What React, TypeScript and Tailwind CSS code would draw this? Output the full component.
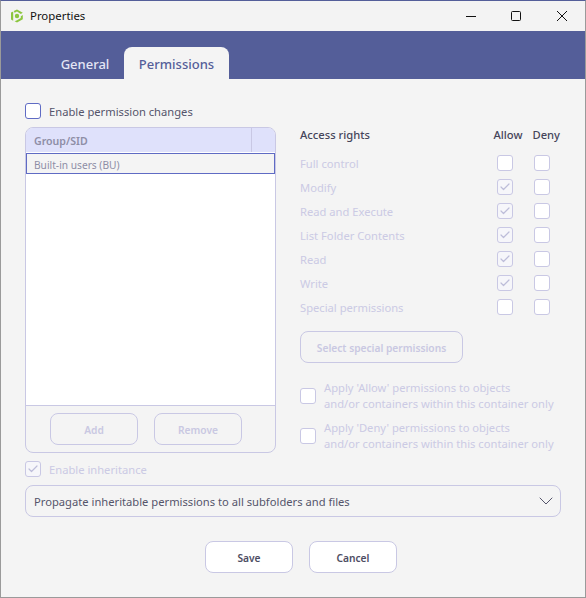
import { ChevronDown, Check } from 'lucide-react';

const rights = [
  { name: 'Full control', allow: false },
  { name: 'Modify', allow: true },
  { name: 'Read and Execute', allow: true },
  { name: 'List Folder Contents', allow: true },
  { name: 'Read', allow: true },
  { name: 'Write', allow: true },
  { name: 'Special permissions', allow: false },
];

function Box({ checked = false, active = false }: { checked?: boolean; active?: boolean }) {
  return (
    <div
      className={`flex h-4 w-4 shrink-0 items-center justify-center rounded-[3px] border ${
        active ? 'border-[#5f6bc4]' : 'border-[#c9c8e4]'
      } ${checked ? 'bg-[#f6f6fa]' : 'bg-white'}`}
    >
      {checked && <Check className="h-3 w-3 text-[#bdbdd9]" strokeWidth={2.4} />}
    </div>
  );
}

function Btn({ label, width, enabled = false }: { label: string; width: string; enabled?: boolean }) {
  return (
    <button
      className={`h-8 rounded-lg border border-[#c9c8e4] pt-1 text-[10.2px] font-semibold ${width} ${
        enabled ? 'bg-white text-[#4d4d63]' : 'text-[#c9c8e2]'
      }`}
    >
      {label}
    </button>
  );
}

export default function App() {
  return (
    <div className="flex h-[598px] w-[586px] flex-col border border-t-[#545e99] border-r-[#9a9a9a] border-b-[#9a9a9a] border-l-[#9a9a9a] bg-[#f4f4f4] font-['Noto_Sans',sans-serif] text-[11.2px] text-[#55556b]">
      {/* Title bar */}
      <div className="flex h-[30px] shrink-0 items-center bg-[#f3f3f3] pb-[1px] pl-[9px]">
        <svg width="14" height="14" viewBox="0 0 14 14" fill="none">
          <path d="M1 3.5V10.5L3.2 11.8V2.5Z" fill="#8cc63f" />
          <path d="M3.8 2 7 0.4 12.8 3.7 10.8 4.9 7 2.6 4.6 3.8Z" fill="#8cc63f" />
          <path d="M12.8 6 V10.3 L7 13.6 4.6 12.3 7 11.2 10.8 9 V7.2Z" fill="#8cc63f" />
          <circle cx="7" cy="7" r="2.2" fill="#8cc63f" />
        </svg>
        <span className="ml-[6px] text-[11.4px] text-[#111]">Properties</span>
        <div className="ml-auto flex items-center pr-[18px]">
          <svg width="10" height="10" viewBox="0 0 10 10" className="mr-[35px]">
            <path d="M0 5.5H10" stroke="#111" />
          </svg>
          <svg width="10" height="10" viewBox="0 0 10 10" className="mr-[36px]">
            <rect x="0.5" y="0.5" width="9" height="9" rx="1" fill="none" stroke="#111" />
          </svg>
          <svg width="10" height="10" viewBox="0 0 10 10">
            <path d="M0 0L10 10M10 0L0 10" stroke="#111" />
          </svg>
        </div>
      </div>

      {/* Tabs */}
      <div className="flex h-[48px] shrink-0 items-end bg-[#545e99] pl-[45px] text-[13px] font-medium">
        <div className="flex h-8 w-[78px] items-center justify-center pt-1 text-[#e4e6f5]">General</div>
        <div className="flex h-8 w-[105px] items-center justify-center rounded-t-lg bg-[#f4f4f4] pt-1 text-[#545e99]">
          Permissions
        </div>
      </div>

      {/* Body */}
      <div className="flex flex-1 flex-col px-6 pt-6">
        <div className="flex h-4 items-center gap-2">
          <Box active />
          <span className="pt-[2px]">Enable permission changes</span>
        </div>

        <div className="mt-2 flex gap-6">
          {/* Group list */}
          <div className="flex h-[326px] w-[251px] flex-col overflow-hidden rounded-lg border border-[#c9c8e4]">
            <div className="flex h-6 shrink-0 bg-[#dfe1fb] text-[10.6px] font-semibold text-[#8e8ea6]">
              <div className="flex flex-1 items-center border-r border-[#c9c8e4] pt-[3px] pl-2">Group/SID</div>
              <div className="w-[23px]" />
            </div>
            <div className="flex-1 bg-white pt-px">
              <div className="flex h-[21px] items-center border border-[#5f6bc4] bg-[#f4f4f4] pt-1 pl-[7px] text-[10.2px] text-[#8e8ea6]">
                Built-in users (BU)
              </div>
            </div>
            <div className="flex h-[47px] shrink-0 items-center justify-center gap-4 border-t border-[#c9c8e4] pr-[9px]">
              <Btn label="Add" width="w-[88px]" />
              <Btn label="Remove" width="w-[88px]" />
            </div>
          </div>

          {/* Access rights */}
          <div className="flex w-[261px] flex-col">
            <div className="flex h-4 items-center gap-[10px] pr-px font-medium text-[#45455a]">
              <span className="flex-1">Access rights</span>
              <span>Allow</span>
              <span>Deny</span>
            </div>
            <div className="mt-3 flex flex-col gap-2 text-[#cbcae4]">
              {rights.map((r) => (
                <div key={r.name} className="flex h-4 items-center">
                  <span className="flex-1 pt-[2px]">{r.name}</span>
                  <Box checked={r.allow} />
                  <span className="w-[21px]" />
                  <Box />
                  <span className="w-[11px]" />
                </div>
              ))}
            </div>
            <div className="mt-4">
              <Btn label="Select special permissions" width="w-[163px]" />
            </div>
            <div className="mt-[17px] flex items-center gap-2 text-[#cbcae4]">
              <Box />
              <span className="leading-4">
                Apply 'Allow' permissions to objects
                <br />
                and/or containers within this container only
              </span>
            </div>
            <div className="mt-2 flex items-center gap-2 text-[#cbcae4]">
              <Box />
              <span className="leading-4">
                Apply 'Deny' permissions to objects
                <br />
                and/or containers within this container only
              </span>
            </div>
          </div>
        </div>

        <div className="mt-2 flex h-4 items-center gap-2 text-[#cbcae4]">
          <Box checked />
          <span className="pt-[2px]">Enable inheritance</span>
        </div>

        <div className="mt-2 flex h-8 w-[536px] items-center justify-between rounded-lg border border-[#c9c8e4] pr-[2px] pl-2">
          <span className="pt-[2px]">Propagate inheritable permissions to all subfolders and files</span>
          <ChevronDown className="h-6 w-6 text-[#55556b]" strokeWidth={1} />
        </div>

        <div className="mt-6 flex justify-center gap-4 pl-4">
          <Btn label="Save" width="w-[88px]" enabled />
          <Btn label="Cancel" width="w-[88px]" enabled />
        </div>
      </div>
    </div>
  );
}
